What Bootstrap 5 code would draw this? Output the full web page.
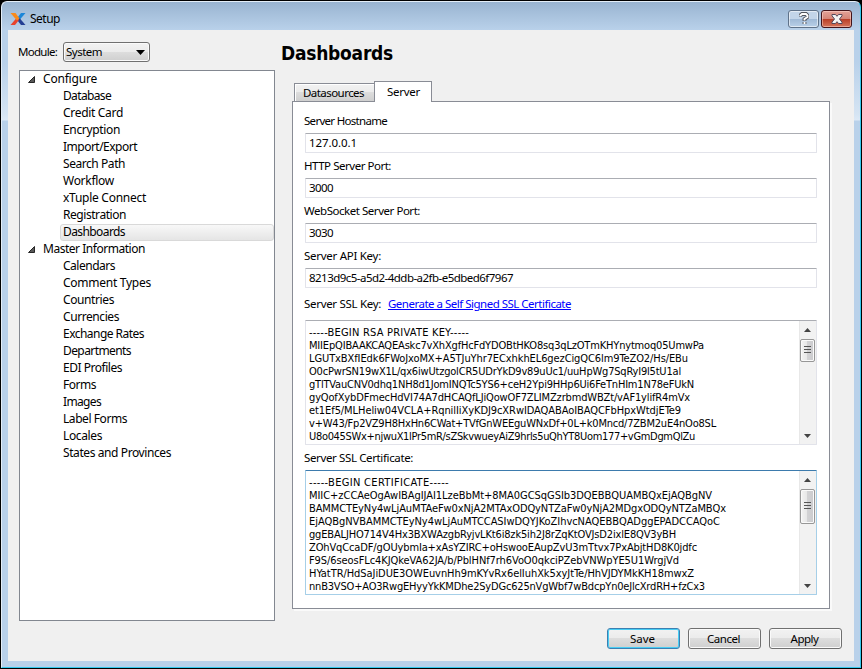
<!DOCTYPE html>
<html lang="en">
<head>
<meta charset="utf-8">
<meta name="viewport" content="width=device-width, initial-scale=1">
<title>Setup</title>
<link href="https://cdn.jsdelivr.net/npm/bootstrap@5.3.0/dist/css/bootstrap.min.css" rel="stylesheet">
<style>
  html, body { height: 669px; overflow: hidden; }
  body { background: #000; color: #000; font: 11.5px/13px "Noto Sans", sans-serif; padding: 1px 1px 1px 1px; }
  [data-w] { white-space: pre; display: inline-block; }
  .window { height: 667px; border: 1px solid #e4eef8; border-right-color: #35c9ee; border-bottom-color: #35c9ee; border-radius: 6px 6px 0 0; padding: 0 6px 6px;
    background: linear-gradient(#99b4d1 0, #b9d1ea 28px, #b9d1ea 60px, #d5e4f3 112px, #dce9f6 118px, #b9d1ea 119px); }
  .titlebar { height: 28px; padding: 5px 0 0 2px; }
  .titlebar .caption { font: 12px/16px "Noto Sans", sans-serif; margin-left: 4px; }
  .cap-btn { width: 31px; height: 18px; border: 1px solid #5f7289; border-radius: 3px; box-shadow: inset 0 0 0 1px rgba(255,255,255,.55); background: linear-gradient(#c3d5e9 50%, #9fb9d6 50%, #b9d0e8); }
  .cap-close { border-color: #43141a; background: linear-gradient(#e3a298 0, #d58577 50%, #b83d26 50%, #d4755c); box-shadow: inset 0 0 0 1px rgba(255,220,210,.5); margin-left: 2px; margin-right: 2px; }
  .client { background: #f0f0f0; height: 631px; padding: 0 12px 12px 10px; }
  .side { width: 257px; padding-top: 12px; }
  .module { height: 20px; margin-bottom: 8px; }
  .module span { margin-top: -1px; }
  .combo { width: 87px; height: 20px; border: 1px solid #707070; border-radius: 3px; padding: 0 4px 0 2px; margin-left: 6px; box-shadow: inset 0 0 0 1px #fafafa; background: linear-gradient(#f2f2f2, #ebebeb 50%, #dddddd 50%, #cfcfcf); }
  .tree { width: 256px; height: 551px; margin-left: 1px; background: #fff; border: 1px solid #828790; font: 12px/17px "Noto Sans", sans-serif; }
  .tree li { height: 17px; padding-left: 43px; }
  .tree li > span { line-height: 16px; vertical-align: top; }
  .tree .branch { padding-left: 8px; display: flex; align-items: flex-start; }
  .tree .branch svg { margin: 5px 8px 0 0; }
  .tree .current { margin-left: 40px; padding-left: 2px; border: 1px solid #d9d9d9; border-radius: 3px; background: linear-gradient(#f8f8f8, #e5e5e5); }
  .tree .current > span { line-height: 14px; }
  .main { width: 567px; padding-left: 5px; }
  .heading { font: bold 19px/24px "DejaVu Sans Condensed", "Noto Sans", sans-serif; margin: 11px 0 0 1px; height: 40px; }
  .tabs { height: 21px; padding-left: 14px; margin-bottom: -1px; position: relative; }
  .tabs .tab { border: 1px solid #898c95; border-bottom: 0; }
  .tab-back { width: 80px; height: 18px; margin-bottom: 1px; border-right: 0 !important; padding-left: 8px; line-height: 17px; box-shadow: inset 1px 1px 0 #fff; background: linear-gradient(#f2f2f2, #ebebeb 50%, #dddddd 50%, #cfcfcf); }
  .tab-front { width: 58px; height: 21px; background: #fff; padding-left: 12px; line-height: 19px; }
  .panel { width: 538px; height: 508px; margin-left: 12px; background: #fff; border: 1px solid #898c95; box-shadow: 2px 2px 0 #fafafa; padding: 12px 12px 0 11px; }
  .field-label { height: 15px; line-height: 13px; }
  .panel .form-control { width: calc(100% - 1px); height: 20px; margin-left: 1px; border: 1px solid #e2e3ea; border-top-color: #abadb3; border-radius: 1px; padding: 0 3px; font: inherit; line-height: 17px; color: #000; background: #fff; }
  .row-gap { margin-top: 4px; margin-bottom: 6px; }
  .ssl-key { margin-top: 9px; }
  .cert-label { margin-top: 5px; line-height: 15px; }
  .cert-gap { margin-top: 5px; }
  .panel .pem { height: 125px; padding: 5px 0 0 3px; font: 11px/13px "DejaVu Sans Condensed", "Noto Sans", sans-serif; overflow: hidden; }
  .pem .line { height: 13px; }
  .panel .focused { border-color: #a6cfe8; border-top-color: #3d7bad; }
  .scroll { width: 17px; margin-top: -5px; padding: 7px 0 6px; background: #f2f2f2; box-shadow: inset 1px 0 0 #e8e8e8; }
  .thumb { width: 15px; margin-top: 7px; border: 1px solid #979797; border-radius: 2px; box-shadow: inset 0 0 0 1px #fafafa; background: linear-gradient(90deg, #f3f3f3, #e6e6e6 50%, #d2d2d4 50%, #cbcbce); }
  .short { height: 23px; } .tall { height: 35px; }
  .link { color: #0000ff; text-decoration: underline; margin-left: 7px; }
  .actions { padding: 19px 0 0; gap: 8px; }
  .actions .btn { width: 73px; height: 21px; padding: 0; font: inherit; line-height: 20px; color: #000; border: 1px solid #707070; border-radius: 3px; box-shadow: inset 0 0 0 1px #fafafa; background: linear-gradient(#f2f2f2, #ebebeb 50%, #dddddd 50%, #cfcfcf); }
  .actions .btn span { margin-left: -2px; }
  .actions .default { border-color: #3c7fb1; box-shadow: inset 0 0 0 1px #48cdf4; }
</style>
<script src="https://cdn.jsdelivr.net/npm/bootstrap@5.3.0/dist/js/bootstrap.bundle.min.js"></script>
</head>
<body>
<div class="window">
  <div class="titlebar d-flex align-items-center">
    <svg width="16" height="14" viewBox="0 0 16 14"><path d="M15.500 1H11L7.500 5.500 9.500 8z" fill="#1c86d8"/><path d="M15.500 13H11L7.500 8.500 9.500 6z" fill="#243f94"/><path d="M.5 13H5l4-5-2-2.500z" fill="#e8432d"/><path d="M.5 1H5.500L9.500 6.500 7 8.500z" fill="#f98a1c"/></svg>
    <span class="caption" data-w="30">Setup</span>
    <div class="cap-btn ms-auto d-flex align-items-center justify-content-center"><svg width="10" height="13" viewBox="0 0 10 13" fill="none"><path d="M1.300 4.500V3.500L3 2h4l1.500 1.500v1.500L5.500 7v2M5.500 10v2" stroke="#50545c" stroke-width="3.800"/><path d="M1.300 4V3.500L3 2h4l1.500 1.500v1.500L5.500 7v1.500M5.500 10v2" stroke="#fff" stroke-width="1.900"/></svg></div>
    <div class="cap-btn cap-close d-flex align-items-center justify-content-center"><svg width="12" height="10" viewBox="0 0 12 10"><path d="M1 .5h3.500L6 2.300 7.500.5H11v1.300L8.500 5 11 8.200v1.300H7.500L6 7.700 4.500 9.500H1V8.200L3.500 5 1 1.800z" fill="#f4f4f4" stroke="#54485a"/></svg></div>
  </div>
  <div class="client d-flex">
    <div class="side">
      <div class="module d-flex align-items-center">
        <span data-w="39">Module:</span>
        <div class="combo d-flex align-items-center justify-content-between"><span data-w="36">System</span><svg width="9" height="5"><path d="M0 0h9L4.500 5z"/></svg></div>
      </div>
      <ul class="tree list-unstyled mb-0">
        <li class="branch"><svg width="7" height="7"><path d="M6.500.5v6h-6z" fill="#595959" stroke="#262626"/></svg><span data-w="54">Configure</span></li>
        <li><span data-w="48">Database</span></li>
        <li><span data-w="60">Credit Card</span></li>
        <li><span data-w="57">Encryption</span></li>
        <li><span data-w="74">Import/Export</span></li>
        <li><span data-w="62">Search Path</span></li>
        <li><span data-w="51">Workflow</span></li>
        <li><span data-w="83">xTuple Connect</span></li>
        <li><span data-w="63">Registration</span></li>
        <li class="current"><span data-w="62">Dashboards</span></li>
        <li class="branch"><svg width="7" height="7"><path d="M6.500.5v6h-6z" fill="#595959" stroke="#262626"/></svg><span data-w="102">Master Information</span></li>
        <li><span data-w="52">Calendars</span></li>
        <li><span data-w="88">Comment Types</span></li>
        <li><span data-w="51">Countries</span></li>
        <li><span data-w="56">Currencies</span></li>
        <li><span data-w="81">Exchange Rates</span></li>
        <li><span data-w="68">Departments</span></li>
        <li><span data-w="59">EDI Profiles</span></li>
        <li><span data-w="33">Forms</span></li>
        <li><span data-w="38">Images</span></li>
        <li><span data-w="64">Label Forms</span></li>
        <li><span data-w="39">Locales</span></li>
        <li><span data-w="108">States and Provinces</span></li>
      </ul>
    </div>
    <div class="main">
      <h1 class="heading"><span data-w="112">Dashboards</span></h1>
      <div class="tabs d-flex align-items-end">
        <div class="tab tab-back"><span data-w="61">Datasources</span></div>
        <div class="tab tab-front"><span data-w="33">Server</span></div>
      </div>
      <div class="panel">
        <div class="field-label"><span data-w="83">Server Hostname</span></div>
        <div class="form-control row-gap"><span data-w="48">127.0.0.1</span></div>
        <div class="field-label"><span data-w="87">HTTP Server Port:</span></div>
        <div class="form-control row-gap"><span data-w="24">3000</span></div>
        <div class="field-label"><span data-w="116">WebSocket Server Port:</span></div>
        <div class="form-control row-gap"><span data-w="24">3030</span></div>
        <div class="field-label"><span data-w="77">Server API Key:</span></div>
        <div class="form-control row-gap mb-0"><span data-w="204">8213d9c5-a5d2-4ddb-a2fb-e5dbed6f7967</span></div>
        <div class="field-label ssl-key d-flex"><span data-w="77">Server SSL Key:</span><span class="link" data-w="183">Generate a Self Signed SSL Certificate</span></div>
        <div class="form-control pem d-flex justify-content-between mt-2">
          <div>
            <div class="line"><span data-w="160">-----BEGIN RSA PRIVATE KEY-----</span></div>
            <div class="line"><span data-w="395">MIIEpQIBAAKCAQEAskc7vXhXgfHcFdYDOBtHKO8sq3qLzOTmKHYnytmoq05UmwPa</span></div>
            <div class="line"><span data-w="379">LGUTxBXfIEdk6FWoJxoMX+A5TJuYhr7ECxhkhEL6gezCigQC6lm9TeZO2/Hs/EBu</span></div>
            <div class="line"><span data-w="372">O0cPwrSN19wX1L/qx6iwUtzgolCR5UDrYkD9v89uUc1/uuHpWg7SqRyI9l5tU1al</span></div>
            <div class="line"><span data-w="385">gTlTVauCNV0dhq1NH8d1JomINQTc5YS6+ceH2Ypi9HHp6Ui6FeTnHIm1N78eFUkN</span></div>
            <div class="line"><span data-w="381">gyQofXybDFmecHdVI74A7dHCAQfLJiQowOF7ZLIMZzrbmdWBZt/vAF1ylifR4mVx</span></div>
            <div class="line"><span data-w="372">et1Ef5/MLHeliw04VCLA+RqnilIiXyKDJ9cXRwIDAQABAoIBAQCFbHpxWtdjETe9</span></div>
            <div class="line"><span data-w="407">v+W43/Fp2VZ9H8HxHn6CWat+TVfGnWEEguWNxDf+0L+k0Mncd/7ZBM2uE4nOo8SL</span></div>
            <div class="line"><span data-w="386">U8o045SWx+njwuX1lPr5mR/sZSkvwueyAiZ9hrls5uQhYT8Uom177+vGmDgmQlZu</span></div>
          </div>
          <div class="scroll d-flex flex-column align-items-center">
            <svg width="7" height="4"><path d="M0 4h7L3.500 0z" fill="#444"/></svg>
            <div class="thumb short d-flex align-items-center justify-content-center"><svg width="7" height="9"><path d="M0 .5h7M0 3.500h7M0 6.500h7" stroke="#555"/></svg></div>
            <svg width="7" height="4" class="mt-auto"><path d="M0 0h7L3.500 4z" fill="#444"/></svg>
          </div>
        </div>
        <div class="field-label cert-label"><span data-w="109">Server SSL Certificate:</span></div>
        <div class="form-control pem focused cert-gap d-flex justify-content-between">
          <div>
            <div class="line"><span data-w="140">-----BEGIN CERTIFICATE-----</span></div>
            <div class="line"><span data-w="403">MIIC+zCCAeOgAwIBAgIJAI1LzeBbMt+8MA0GCSqGSIb3DQEBBQUAMBQxEjAQBgNV</span></div>
            <div class="line"><span data-w="417">BAMMCTEyNy4wLjAuMTAeFw0xNjA2MTAxODQyNTZaFw0yNjA2MDgxODQyNTZaMBQx</span></div>
            <div class="line"><span data-w="411">EjAQBgNVBAMMCTEyNy4wLjAuMTCCASIwDQYJKoZIhvcNAQEBBQADggEPADCCAQoC</span></div>
            <div class="line"><span data-w="367">ggEBALJHO714V4Hx3BXWAzgbRyjvLKt6i8zk5ih2J8rZqKtOVJsD2ixlE8QV3yBH</span></div>
            <div class="line"><span data-w="388">ZOhVqCcaDF/gOUybmIa+xAsYZIRC+oHswooEAupZvU3mTtvx7PxAbjtHD8K0jdfc</span></div>
            <div class="line"><span data-w="370">F9S/6seosFLc4KJQkeVA62JA/b/PblHNf7rh6VoO0qkciPZebVNWpYE5U1WrgjVd</span></div>
            <div class="line"><span data-w="385">HYatTR/HdSaJiDUE3OWEuvnHh9mKYvRx6elIuhXk5xyJtTe/HhVJDYMkKH18mwxZ</span></div>
            <div class="line"><span data-w="396">nnB3VSO+AO3RwgEHyyYkKMDhe2SyDGc625nVgWbf7wBdcpYn0eJlcXrdRH+fzCx3</span></div>
          </div>
          <div class="scroll d-flex flex-column align-items-center">
            <svg width="7" height="4"><path d="M0 4h7L3.500 0z" fill="#444"/></svg>
            <div class="thumb tall d-flex align-items-center justify-content-center"><svg width="7" height="9"><path d="M0 .5h7M0 3.500h7M0 6.500h7" stroke="#555"/></svg></div>
            <svg width="7" height="4" class="mt-auto"><path d="M0 0h7L3.500 4z" fill="#444"/></svg>
          </div>
        </div>
      </div>
      <div class="actions d-flex justify-content-end">
        <button class="btn default"><span data-w="25">Save</span></button>
        <button class="btn"><span data-w="33">Cancel</span></button>
        <button class="btn"><span data-w="28">Apply</span></button>
      </div>
    </div>
  </div>
</div>
<script>
  // Track each text run to the width given in data-w.
  document.querySelectorAll('[data-w]').forEach(function (el) {
    var natural = el.getBoundingClientRect().width;
    el.style.letterSpacing = ((el.dataset.w - natural) / el.textContent.length).toFixed(3) + 'px';
  });
</script>
</body>
</html>
